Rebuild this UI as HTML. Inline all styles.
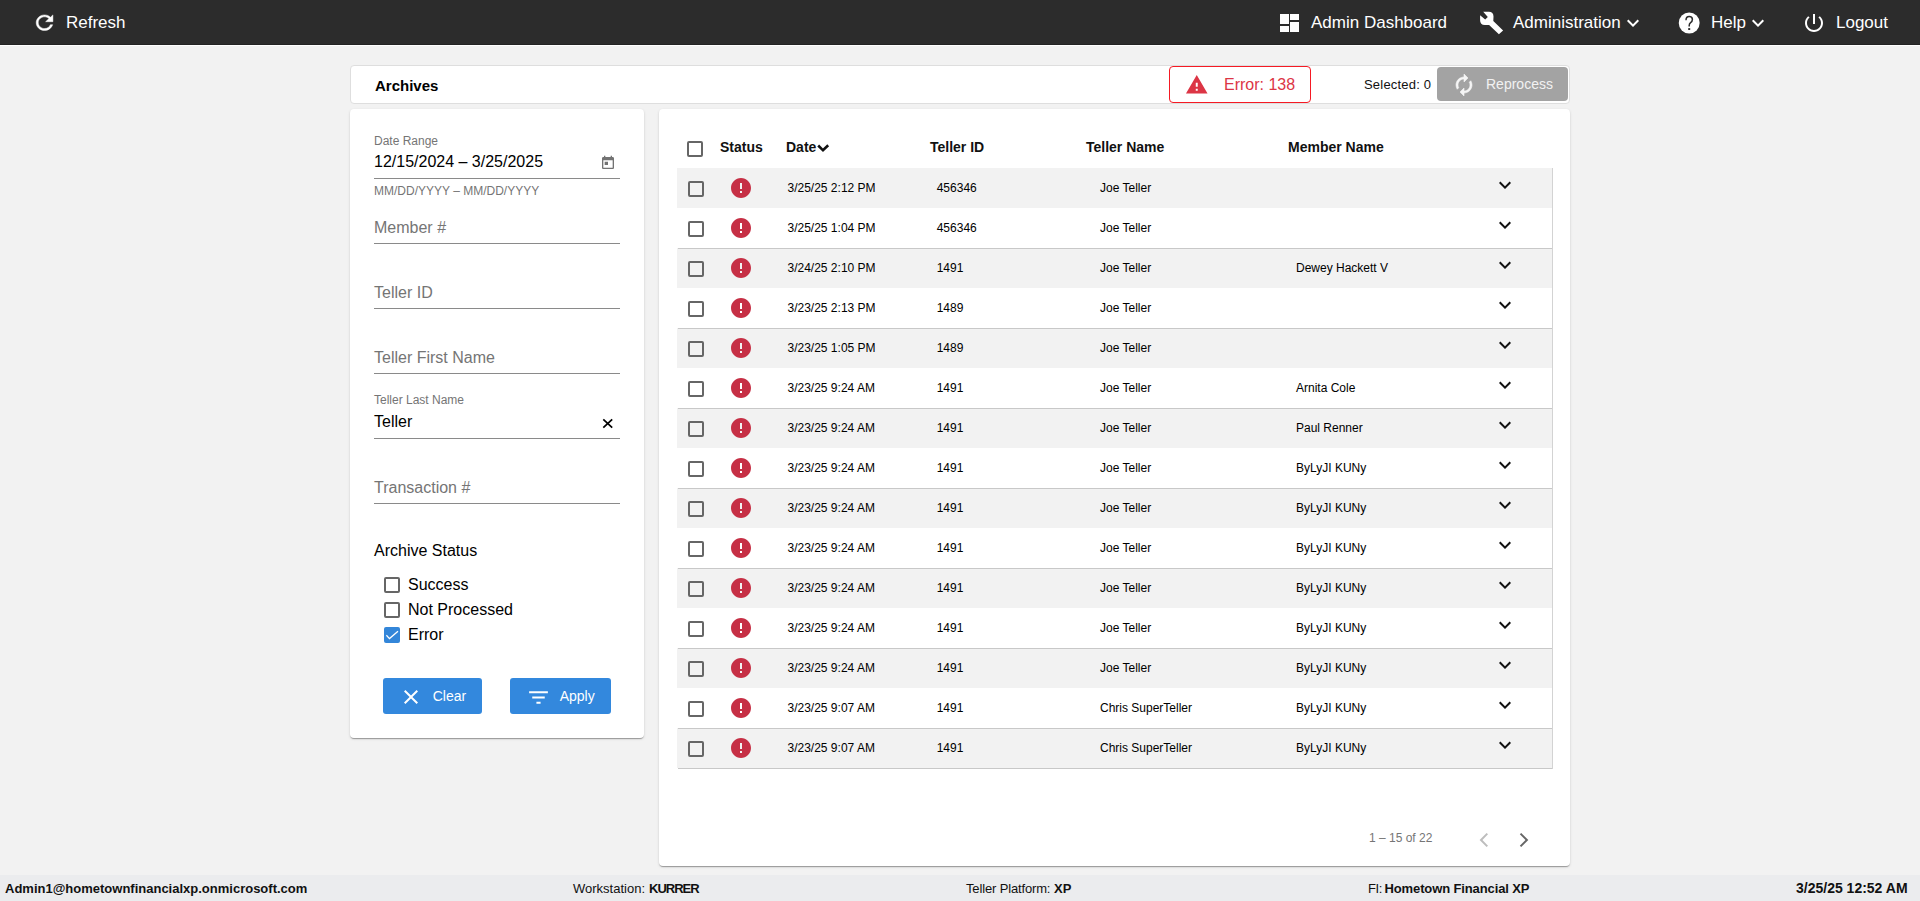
<!DOCTYPE html>
<html><head><meta charset="utf-8">
<style>
html,body{margin:0;padding:0;}
body{width:1920px;height:901px;overflow:hidden;position:relative;background:#f2f2f2;font-family:"Liberation Sans",sans-serif;color:#000;}
.t{position:absolute;white-space:nowrap;line-height:1;}
.ic{position:absolute;display:block;}
.abs{position:absolute;}
.hdr{left:0;top:0;width:1920px;height:44px;background:#2c2c2c;border-bottom:1px solid #232323;}
.hline{left:0;top:45px;width:1920px;height:1px;background:#fff;}
.w{color:#fff;}
.card{background:#fff;border-radius:4px;box-shadow:0 2px 1px -1px rgba(0,0,0,.2),0 1px 1px 0 rgba(0,0,0,.14),0 1px 3px 0 rgba(0,0,0,.12);}
.cb{position:absolute;width:12px;height:12px;border:2px solid #666;border-radius:2px;background:transparent;}
.uline{position:absolute;left:374px;width:246px;height:1px;background:#8a8a8a;}
.ph{color:#757575;}
.lbl{color:#757575;}
.btn{position:absolute;background:#3388dd;border-radius:3px;}
.row{position:absolute;left:677px;width:875px;height:40px;}
.g{background:#f2f2f2;}
.bb{border-bottom:1px solid #c8c8c8;}
.rt{color:#000;}
.hd{font-weight:bold;color:#111;}
.ft{color:#111;}
</style></head><body>
<div class="abs hdr"></div><div class="abs hline"></div>
<svg class="ic" style="left:31.8px;top:11.2px;width:25.1px;height:23.4px" viewBox="0 0 24 24" preserveAspectRatio="none"><path fill="#fff" stroke="#fff" stroke-width="0.45" d="M17.65 6.35C16.2 4.9 14.21 4 12 4c-4.42 0-7.99 3.58-7.99 8s3.57 8 7.99 8c3.73 0 6.84-2.55 7.73-6h-2.08c-.82 2.33-3.04 4-5.65 4-3.31 0-6-2.69-6-6s2.69-6 6-6c1.66 0 3.14.69 4.22 1.78L13 11h7V4l-2.35 2.35z"/></svg>
<div class="t w" style="left:66px;top:13.61px;font-size:17px;">Refresh</div>
<svg class="ic" style="left:1270px;top:8px;width:40px;height:30px" viewBox="0 0 40 30"><g fill="#fff"><rect x="10" y="6" width="9" height="10"/><rect x="10" y="18" width="9" height="6"/><rect x="20" y="6" width="9" height="6"/><rect x="20" y="14" width="9" height="10"/></g></svg>
<div class="t w" style="left:1311px;top:13.61px;font-size:17px;">Admin Dashboard</div>
<svg class="ic" style="left:1474px;top:6px;width:36px;height:34px" viewBox="0 0 36 34"><path fill="#fff" d="M19.3 15 L29.1 24.6 L24.9 28.3 L15.1 18.9 L10.8 18.9 Q6.1 18.9 6.1 14.2 L6.1 9.2 L11.2 13.6 L13.8 10.9 L9.2 5.8 L14.8 5.7 Q19.5 5.7 19.5 10.6 Z"/></svg>
<div class="t w" style="left:1513px;top:13.61px;font-size:17px;">Administration</div>
<svg class="ic" style="left:1621px;top:11px;width:24px;height:24px;" viewBox="0 0 24 24"><path fill="#fff" d="M16.59 8.59L12 13.17 7.41 8.59 6 10l6 6 6-6z"/></svg>
<svg class="ic" style="left:1672px;top:6px;width:36px;height:34px" viewBox="0 0 36 34"><circle cx="17.2" cy="17" r="10.45" fill="#fff"/><path d="M14 14.3 Q14 10.6 17.2 10.6 Q20.4 10.6 20.4 13.6 Q20.4 15.5 18.6 16.6 Q17.2 17.6 17.2 19.4 L17.2 20.6" stroke="#2c2c2c" stroke-width="1.5" fill="none"/><rect x="16.2" y="22.1" width="2" height="1.9" fill="#2c2c2c"/></svg>
<div class="t w" style="left:1711px;top:13.61px;font-size:17px;">Help</div>
<svg class="ic" style="left:1746px;top:11px;width:24px;height:24px;" viewBox="0 0 24 24"><path fill="#fff" d="M16.59 8.59L12 13.17 7.41 8.59 6 10l6 6 6-6z"/></svg>
<svg class="ic" style="left:1802px;top:11px;width:24px;height:24px;" viewBox="0 0 24 24"><path fill="#fff" d="M13 3h-2v10h2V3zm4.83 2.17l-1.42 1.42C17.99 7.86 19 9.81 19 12c0 3.87-3.13 7-7 7s-7-3.13-7-7c0-2.19 1.01-4.14 2.58-5.42L6.17 5.17C4.23 6.82 3 9.26 3 12c0 4.97 4.03 9 9 9s9-4.03 9-9c0-2.74-1.23-5.18-3.17-6.83z"/></svg>
<div class="t w" style="left:1836px;top:13.61px;font-size:17px;">Logout</div>
<div class="abs" style="left:350px;top:65px;width:1218px;height:37px;background:#fff;border:1px solid #dedede;border-radius:4px;"></div>
<div class="t " style="left:375px;top:78.30px;font-size:15px;font-weight:bold;">Archives</div>
<div class="abs" style="left:1169px;top:66px;width:140px;height:35px;border:1px solid #f51a24;border-radius:4px;"></div>
<svg class="ic" style="left:1185.2px;top:73.3px;width:23.5px;height:23.5px;" viewBox="0 0 24 24"><path fill="#dc3545" d="M1 21h22L12 2 1 21zm12-3h-2v-2h2v2zm0-4h-2v-4h2v4z"/></svg>
<div class="t " style="left:1224px;top:76.96px;font-size:16px;color:#dc3545;">Error: 138</div>
<div class="t " style="left:1364px;top:78.00px;font-size:13px;color:#111;letter-spacing:0.2px;">Selected: 0</div>
<div class="abs" style="left:1437px;top:67px;width:131px;height:34px;background:#a3a3a3;border-radius:4px;"></div>
<svg class="ic" style="left:1451.5px;top:73px;width:24px;height:24px;transform:scaleX(-1);" viewBox="0 0 24 24"><path stroke="#f5f5f5" stroke-width="0.6" fill="#f5f5f5" d="M12 4V1L8 5l4 4V6c3.31 0 6 2.69 6 6 0 1.01-.25 1.97-.7 2.8l1.46 1.46C19.54 15.03 20 13.57 20 12c0-4.42-3.58-8-8-8zm0 14c-3.31 0-6-2.69-6-6 0-1.01.25-1.97.7-2.8L5.24 7.74C4.46 8.97 4 10.43 4 12c0 4.42 3.58 8 8 8v3l4-4-4-4v3z"/></svg>
<div class="t " style="left:1486px;top:77.15px;font-size:14px;color:#f2f2f2;">Reprocess</div>
<div class="abs card" style="left:350px;top:109px;width:294px;height:629px;"></div>
<div class="t lbl" style="left:374px;top:134.84px;font-size:12px;">Date Range</div>
<div class="t " style="left:374px;top:154.46px;font-size:16px;color:#000;">12/15/2024 – 3/25/2025</div>
<svg class="ic" style="left:600px;top:155px;width:16px;height:16px;" viewBox="0 0 24 24"><path fill="#737373" d="M19 3h-1V1h-2v2H8V1H6v2H5c-1.11 0-1.99.9-1.99 2L3 19c0 1.1.89 2 2 2h14c1.1 0 2-.9 2-2V5c0-1.1-.9-2-2-2zm0 16H5V8h14v11zM7 10h5v5H7z"/></svg>
<div class="uline" style="top:178px;"></div>
<div class="t lbl" style="left:374px;top:184.84px;font-size:12px;">MM/DD/YYYY – MM/DD/YYYY</div>
<div class="t ph" style="left:374px;top:220.46px;font-size:16px;">Member #</div>
<div class="uline" style="top:243px;"></div>
<div class="t ph" style="left:374px;top:285.46px;font-size:16px;">Teller ID</div>
<div class="uline" style="top:308px;"></div>
<div class="t ph" style="left:374px;top:350.46px;font-size:16px;">Teller First Name</div>
<div class="uline" style="top:373px;"></div>
<div class="t lbl" style="left:374px;top:393.84px;font-size:12px;">Teller Last Name</div>
<div class="t " style="left:374px;top:414.46px;font-size:16px;color:#000;">Teller</div>
<svg class="ic" style="left:598px;top:413px;width:20px;height:20px" viewBox="0 0 20 20"><path d="M5.3 6.3 L14.2 14.7 M14.2 6.3 L5.3 14.7" stroke="#000" stroke-width="1.7" fill="none"/></svg>
<div class="uline" style="top:438px;"></div>
<div class="t ph" style="left:374px;top:480.46px;font-size:16px;">Transaction #</div>
<div class="uline" style="top:503px;"></div>
<div class="t " style="left:374px;top:543.46px;font-size:16px;color:#000;">Archive Status</div>
<div class="cb" style="left:384px;top:577px;"></div>
<div class="t " style="left:408px;top:577.16px;font-size:16px;color:#000;">Success</div>
<div class="cb" style="left:384px;top:602px;"></div>
<div class="t " style="left:408px;top:602.16px;font-size:16px;color:#000;">Not Processed</div>
<div class="abs" style="left:384px;top:627px;width:16px;height:16px;background:#3386d9;border-radius:2px;"></div>
<svg class="ic" style="left:384px;top:627px;width:16px;height:16px" viewBox="0 0 16 16"><path d="M2.4 8.3 L5.5 11.6 L14 4.3" fill="none" stroke="#fff" stroke-width="1.3"/></svg>
<div class="t " style="left:408px;top:627.16px;font-size:16px;color:#000;">Error</div>
<div class="btn" style="left:383px;top:678px;width:99px;height:36px;"></div>
<svg class="ic" style="left:399px;top:685px;width:24px;height:24px;" viewBox="0 0 24 24"><path fill="#fff" d="M19 6.41L17.59 5 12 10.59 6.41 5 5 6.41 10.59 12 5 17.59 6.41 19 12 13.41 17.59 19 19 17.59 13.41 12z"/></svg>
<div class="t w" style="left:432.7px;top:689.15px;font-size:14px;">Clear</div>
<div class="btn" style="left:510px;top:678px;width:101px;height:36px;"></div>
<svg class="ic" style="left:525.5px;top:684.5px;width:25px;height:25px;" viewBox="0 0 24 24"><path fill="#fff" d="M10 18h4v-2h-4v2zM3 6v2h18V6H3zm3 7h12v-2H6v2z"/></svg>
<div class="t w" style="left:559.7px;top:689.15px;font-size:14px;">Apply</div>
<div class="abs card" style="left:659px;top:109px;width:911px;height:757px;"></div>
<div class="cb" style="left:687px;top:141px;"></div>
<div class="t hd" style="left:720px;top:140.15px;font-size:14px;">Status</div>
<div class="t hd" style="left:786px;top:140.15px;font-size:14px;">Date</div>
<svg class="ic" style="left:810px;top:136px;width:24px;height:24px" viewBox="0 0 24 24"><path d="M8.2 9.5 L13 14.3 L18.2 9.3" stroke="#111" stroke-width="2.6" fill="none"/></svg>
<div class="t hd" style="left:930px;top:140.15px;font-size:14px;">Teller ID</div>
<div class="t hd" style="left:1086px;top:140.15px;font-size:14px;">Teller Name</div>
<div class="t hd" style="left:1288px;top:140.15px;font-size:14px;">Member Name</div>
<div class="row g" style="top:168px;height:40px;"></div>
<div class="cb" style="left:688px;top:181px;"></div>
<svg class="ic" style="left:729px;top:176px;width:24px;height:24px;" viewBox="0 0 24 24"><path fill="#c62f45" d="M12 2C6.48 2 2 6.48 2 12s4.48 10 10 10 10-4.48 10-10S17.52 2 12 2zm1 15h-2v-2h2v2zm0-4h-2V7h2v6z"/></svg>
<div class="t rt" style="left:787.5px;top:181.84px;font-size:12px;">3/25/25 2:12 PM</div>
<div class="t rt" style="left:936.7px;top:181.84px;font-size:12px;">456346</div>
<div class="t rt" style="left:1100px;top:181.84px;font-size:12px;">Joe Teller</div>
<svg class="ic" style="left:1492.5px;top:172.8px;width:24px;height:24px;" viewBox="0 0 24 24"><path fill="#111" d="M16.59 8.59L12 13.17 7.41 8.59 6 10l6 6 6-6z"/></svg>
<div class="abs" style="left:678px;top:248px;width:874px;height:1px;background:#c8c8c8;z-index:2;"></div>
<div class="cb" style="left:688px;top:221px;"></div>
<svg class="ic" style="left:729px;top:216px;width:24px;height:24px;" viewBox="0 0 24 24"><path fill="#c62f45" d="M12 2C6.48 2 2 6.48 2 12s4.48 10 10 10 10-4.48 10-10S17.52 2 12 2zm1 15h-2v-2h2v2zm0-4h-2V7h2v6z"/></svg>
<div class="t rt" style="left:787.5px;top:221.84px;font-size:12px;">3/25/25 1:04 PM</div>
<div class="t rt" style="left:936.7px;top:221.84px;font-size:12px;">456346</div>
<div class="t rt" style="left:1100px;top:221.84px;font-size:12px;">Joe Teller</div>
<svg class="ic" style="left:1492.5px;top:212.8px;width:24px;height:24px;" viewBox="0 0 24 24"><path fill="#111" d="M16.59 8.59L12 13.17 7.41 8.59 6 10l6 6 6-6z"/></svg>
<div class="row g" style="top:248px;height:40px;"></div>
<div class="cb" style="left:688px;top:261px;"></div>
<svg class="ic" style="left:729px;top:256px;width:24px;height:24px;" viewBox="0 0 24 24"><path fill="#c62f45" d="M12 2C6.48 2 2 6.48 2 12s4.48 10 10 10 10-4.48 10-10S17.52 2 12 2zm1 15h-2v-2h2v2zm0-4h-2V7h2v6z"/></svg>
<div class="t rt" style="left:787.5px;top:261.84px;font-size:12px;">3/24/25 2:10 PM</div>
<div class="t rt" style="left:936.7px;top:261.84px;font-size:12px;">1491</div>
<div class="t rt" style="left:1100px;top:261.84px;font-size:12px;">Joe Teller</div>
<div class="t rt" style="left:1296px;top:261.84px;font-size:12px;">Dewey Hackett V</div>
<svg class="ic" style="left:1492.5px;top:252.8px;width:24px;height:24px;" viewBox="0 0 24 24"><path fill="#111" d="M16.59 8.59L12 13.17 7.41 8.59 6 10l6 6 6-6z"/></svg>
<div class="abs" style="left:678px;top:328px;width:874px;height:1px;background:#c8c8c8;z-index:2;"></div>
<div class="cb" style="left:688px;top:301px;"></div>
<svg class="ic" style="left:729px;top:296px;width:24px;height:24px;" viewBox="0 0 24 24"><path fill="#c62f45" d="M12 2C6.48 2 2 6.48 2 12s4.48 10 10 10 10-4.48 10-10S17.52 2 12 2zm1 15h-2v-2h2v2zm0-4h-2V7h2v6z"/></svg>
<div class="t rt" style="left:787.5px;top:301.84px;font-size:12px;">3/23/25 2:13 PM</div>
<div class="t rt" style="left:936.7px;top:301.84px;font-size:12px;">1489</div>
<div class="t rt" style="left:1100px;top:301.84px;font-size:12px;">Joe Teller</div>
<svg class="ic" style="left:1492.5px;top:292.8px;width:24px;height:24px;" viewBox="0 0 24 24"><path fill="#111" d="M16.59 8.59L12 13.17 7.41 8.59 6 10l6 6 6-6z"/></svg>
<div class="row g" style="top:328px;height:40px;"></div>
<div class="cb" style="left:688px;top:341px;"></div>
<svg class="ic" style="left:729px;top:336px;width:24px;height:24px;" viewBox="0 0 24 24"><path fill="#c62f45" d="M12 2C6.48 2 2 6.48 2 12s4.48 10 10 10 10-4.48 10-10S17.52 2 12 2zm1 15h-2v-2h2v2zm0-4h-2V7h2v6z"/></svg>
<div class="t rt" style="left:787.5px;top:341.84px;font-size:12px;">3/23/25 1:05 PM</div>
<div class="t rt" style="left:936.7px;top:341.84px;font-size:12px;">1489</div>
<div class="t rt" style="left:1100px;top:341.84px;font-size:12px;">Joe Teller</div>
<svg class="ic" style="left:1492.5px;top:332.8px;width:24px;height:24px;" viewBox="0 0 24 24"><path fill="#111" d="M16.59 8.59L12 13.17 7.41 8.59 6 10l6 6 6-6z"/></svg>
<div class="abs" style="left:678px;top:408px;width:874px;height:1px;background:#c8c8c8;z-index:2;"></div>
<div class="cb" style="left:688px;top:381px;"></div>
<svg class="ic" style="left:729px;top:376px;width:24px;height:24px;" viewBox="0 0 24 24"><path fill="#c62f45" d="M12 2C6.48 2 2 6.48 2 12s4.48 10 10 10 10-4.48 10-10S17.52 2 12 2zm1 15h-2v-2h2v2zm0-4h-2V7h2v6z"/></svg>
<div class="t rt" style="left:787.5px;top:381.84px;font-size:12px;">3/23/25 9:24 AM</div>
<div class="t rt" style="left:936.7px;top:381.84px;font-size:12px;">1491</div>
<div class="t rt" style="left:1100px;top:381.84px;font-size:12px;">Joe Teller</div>
<div class="t rt" style="left:1296px;top:381.84px;font-size:12px;">Arnita Cole</div>
<svg class="ic" style="left:1492.5px;top:372.8px;width:24px;height:24px;" viewBox="0 0 24 24"><path fill="#111" d="M16.59 8.59L12 13.17 7.41 8.59 6 10l6 6 6-6z"/></svg>
<div class="row g" style="top:408px;height:40px;"></div>
<div class="cb" style="left:688px;top:421px;"></div>
<svg class="ic" style="left:729px;top:416px;width:24px;height:24px;" viewBox="0 0 24 24"><path fill="#c62f45" d="M12 2C6.48 2 2 6.48 2 12s4.48 10 10 10 10-4.48 10-10S17.52 2 12 2zm1 15h-2v-2h2v2zm0-4h-2V7h2v6z"/></svg>
<div class="t rt" style="left:787.5px;top:421.84px;font-size:12px;">3/23/25 9:24 AM</div>
<div class="t rt" style="left:936.7px;top:421.84px;font-size:12px;">1491</div>
<div class="t rt" style="left:1100px;top:421.84px;font-size:12px;">Joe Teller</div>
<div class="t rt" style="left:1296px;top:421.84px;font-size:12px;">Paul Renner</div>
<svg class="ic" style="left:1492.5px;top:412.8px;width:24px;height:24px;" viewBox="0 0 24 24"><path fill="#111" d="M16.59 8.59L12 13.17 7.41 8.59 6 10l6 6 6-6z"/></svg>
<div class="abs" style="left:678px;top:488px;width:874px;height:1px;background:#c8c8c8;z-index:2;"></div>
<div class="cb" style="left:688px;top:461px;"></div>
<svg class="ic" style="left:729px;top:456px;width:24px;height:24px;" viewBox="0 0 24 24"><path fill="#c62f45" d="M12 2C6.48 2 2 6.48 2 12s4.48 10 10 10 10-4.48 10-10S17.52 2 12 2zm1 15h-2v-2h2v2zm0-4h-2V7h2v6z"/></svg>
<div class="t rt" style="left:787.5px;top:461.84px;font-size:12px;">3/23/25 9:24 AM</div>
<div class="t rt" style="left:936.7px;top:461.84px;font-size:12px;">1491</div>
<div class="t rt" style="left:1100px;top:461.84px;font-size:12px;">Joe Teller</div>
<div class="t rt" style="left:1296px;top:461.84px;font-size:12px;">ByLyJI KUNy</div>
<svg class="ic" style="left:1492.5px;top:452.8px;width:24px;height:24px;" viewBox="0 0 24 24"><path fill="#111" d="M16.59 8.59L12 13.17 7.41 8.59 6 10l6 6 6-6z"/></svg>
<div class="row g" style="top:488px;height:40px;"></div>
<div class="cb" style="left:688px;top:501px;"></div>
<svg class="ic" style="left:729px;top:496px;width:24px;height:24px;" viewBox="0 0 24 24"><path fill="#c62f45" d="M12 2C6.48 2 2 6.48 2 12s4.48 10 10 10 10-4.48 10-10S17.52 2 12 2zm1 15h-2v-2h2v2zm0-4h-2V7h2v6z"/></svg>
<div class="t rt" style="left:787.5px;top:501.84px;font-size:12px;">3/23/25 9:24 AM</div>
<div class="t rt" style="left:936.7px;top:501.84px;font-size:12px;">1491</div>
<div class="t rt" style="left:1100px;top:501.84px;font-size:12px;">Joe Teller</div>
<div class="t rt" style="left:1296px;top:501.84px;font-size:12px;">ByLyJI KUNy</div>
<svg class="ic" style="left:1492.5px;top:492.8px;width:24px;height:24px;" viewBox="0 0 24 24"><path fill="#111" d="M16.59 8.59L12 13.17 7.41 8.59 6 10l6 6 6-6z"/></svg>
<div class="abs" style="left:678px;top:568px;width:874px;height:1px;background:#c8c8c8;z-index:2;"></div>
<div class="cb" style="left:688px;top:541px;"></div>
<svg class="ic" style="left:729px;top:536px;width:24px;height:24px;" viewBox="0 0 24 24"><path fill="#c62f45" d="M12 2C6.48 2 2 6.48 2 12s4.48 10 10 10 10-4.48 10-10S17.52 2 12 2zm1 15h-2v-2h2v2zm0-4h-2V7h2v6z"/></svg>
<div class="t rt" style="left:787.5px;top:541.84px;font-size:12px;">3/23/25 9:24 AM</div>
<div class="t rt" style="left:936.7px;top:541.84px;font-size:12px;">1491</div>
<div class="t rt" style="left:1100px;top:541.84px;font-size:12px;">Joe Teller</div>
<div class="t rt" style="left:1296px;top:541.84px;font-size:12px;">ByLyJI KUNy</div>
<svg class="ic" style="left:1492.5px;top:532.8px;width:24px;height:24px;" viewBox="0 0 24 24"><path fill="#111" d="M16.59 8.59L12 13.17 7.41 8.59 6 10l6 6 6-6z"/></svg>
<div class="row g" style="top:568px;height:40px;"></div>
<div class="cb" style="left:688px;top:581px;"></div>
<svg class="ic" style="left:729px;top:576px;width:24px;height:24px;" viewBox="0 0 24 24"><path fill="#c62f45" d="M12 2C6.48 2 2 6.48 2 12s4.48 10 10 10 10-4.48 10-10S17.52 2 12 2zm1 15h-2v-2h2v2zm0-4h-2V7h2v6z"/></svg>
<div class="t rt" style="left:787.5px;top:581.84px;font-size:12px;">3/23/25 9:24 AM</div>
<div class="t rt" style="left:936.7px;top:581.84px;font-size:12px;">1491</div>
<div class="t rt" style="left:1100px;top:581.84px;font-size:12px;">Joe Teller</div>
<div class="t rt" style="left:1296px;top:581.84px;font-size:12px;">ByLyJI KUNy</div>
<svg class="ic" style="left:1492.5px;top:572.8px;width:24px;height:24px;" viewBox="0 0 24 24"><path fill="#111" d="M16.59 8.59L12 13.17 7.41 8.59 6 10l6 6 6-6z"/></svg>
<div class="abs" style="left:678px;top:648px;width:874px;height:1px;background:#c8c8c8;z-index:2;"></div>
<div class="cb" style="left:688px;top:621px;"></div>
<svg class="ic" style="left:729px;top:616px;width:24px;height:24px;" viewBox="0 0 24 24"><path fill="#c62f45" d="M12 2C6.48 2 2 6.48 2 12s4.48 10 10 10 10-4.48 10-10S17.52 2 12 2zm1 15h-2v-2h2v2zm0-4h-2V7h2v6z"/></svg>
<div class="t rt" style="left:787.5px;top:621.84px;font-size:12px;">3/23/25 9:24 AM</div>
<div class="t rt" style="left:936.7px;top:621.84px;font-size:12px;">1491</div>
<div class="t rt" style="left:1100px;top:621.84px;font-size:12px;">Joe Teller</div>
<div class="t rt" style="left:1296px;top:621.84px;font-size:12px;">ByLyJI KUNy</div>
<svg class="ic" style="left:1492.5px;top:612.8px;width:24px;height:24px;" viewBox="0 0 24 24"><path fill="#111" d="M16.59 8.59L12 13.17 7.41 8.59 6 10l6 6 6-6z"/></svg>
<div class="row g" style="top:648px;height:40px;"></div>
<div class="cb" style="left:688px;top:661px;"></div>
<svg class="ic" style="left:729px;top:656px;width:24px;height:24px;" viewBox="0 0 24 24"><path fill="#c62f45" d="M12 2C6.48 2 2 6.48 2 12s4.48 10 10 10 10-4.48 10-10S17.52 2 12 2zm1 15h-2v-2h2v2zm0-4h-2V7h2v6z"/></svg>
<div class="t rt" style="left:787.5px;top:661.84px;font-size:12px;">3/23/25 9:24 AM</div>
<div class="t rt" style="left:936.7px;top:661.84px;font-size:12px;">1491</div>
<div class="t rt" style="left:1100px;top:661.84px;font-size:12px;">Joe Teller</div>
<div class="t rt" style="left:1296px;top:661.84px;font-size:12px;">ByLyJI KUNy</div>
<svg class="ic" style="left:1492.5px;top:652.8px;width:24px;height:24px;" viewBox="0 0 24 24"><path fill="#111" d="M16.59 8.59L12 13.17 7.41 8.59 6 10l6 6 6-6z"/></svg>
<div class="abs" style="left:678px;top:728px;width:874px;height:1px;background:#c8c8c8;z-index:2;"></div>
<div class="cb" style="left:688px;top:701px;"></div>
<svg class="ic" style="left:729px;top:696px;width:24px;height:24px;" viewBox="0 0 24 24"><path fill="#c62f45" d="M12 2C6.48 2 2 6.48 2 12s4.48 10 10 10 10-4.48 10-10S17.52 2 12 2zm1 15h-2v-2h2v2zm0-4h-2V7h2v6z"/></svg>
<div class="t rt" style="left:787.5px;top:701.84px;font-size:12px;">3/23/25 9:07 AM</div>
<div class="t rt" style="left:936.7px;top:701.84px;font-size:12px;">1491</div>
<div class="t rt" style="left:1100px;top:701.84px;font-size:12px;">Chris SuperTeller</div>
<div class="t rt" style="left:1296px;top:701.84px;font-size:12px;">ByLyJI KUNy</div>
<svg class="ic" style="left:1492.5px;top:692.8px;width:24px;height:24px;" viewBox="0 0 24 24"><path fill="#111" d="M16.59 8.59L12 13.17 7.41 8.59 6 10l6 6 6-6z"/></svg>
<div class="row g" style="top:728px;height:40px;"></div>
<div class="abs" style="left:678px;top:768px;width:874px;height:1px;background:#c8c8c8;z-index:2;"></div>
<div class="cb" style="left:688px;top:741px;"></div>
<svg class="ic" style="left:729px;top:736px;width:24px;height:24px;" viewBox="0 0 24 24"><path fill="#c62f45" d="M12 2C6.48 2 2 6.48 2 12s4.48 10 10 10 10-4.48 10-10S17.52 2 12 2zm1 15h-2v-2h2v2zm0-4h-2V7h2v6z"/></svg>
<div class="t rt" style="left:787.5px;top:741.84px;font-size:12px;">3/23/25 9:07 AM</div>
<div class="t rt" style="left:936.7px;top:741.84px;font-size:12px;">1491</div>
<div class="t rt" style="left:1100px;top:741.84px;font-size:12px;">Chris SuperTeller</div>
<div class="t rt" style="left:1296px;top:741.84px;font-size:12px;">ByLyJI KUNy</div>
<svg class="ic" style="left:1492.5px;top:732.8px;width:24px;height:24px;" viewBox="0 0 24 24"><path fill="#111" d="M16.59 8.59L12 13.17 7.41 8.59 6 10l6 6 6-6z"/></svg>
<div class="abs" style="left:1552px;top:168px;width:1px;height:601px;background:#d3d3d3;"></div>
<div class="t " style="left:1369px;top:831.84px;font-size:12px;color:#757575;">1 – 15 of 22</div>
<svg class="ic" style="left:1470px;top:824px;width:70px;height:32px" viewBox="0 0 70 32"><path d="M17.3 9.6 L11 16 L17.3 22.4" stroke="#bdbdbd" stroke-width="2" fill="none"/><path d="M50.5 9.6 L56.9 16 L50.5 22.4" stroke="#666" stroke-width="2" fill="none"/></svg>
<div class="abs" style="left:0;top:875px;width:1920px;height:26px;background:#ebecee;"></div>
<div class="t ft" style="left:5px;top:882.00px;font-size:13px;font-weight:bold;">Admin1@hometownfinancialxp.onmicrosoft.com</div>
<div class="t ft" style="left:573px;top:882.00px;font-size:13px;">Workstation:</div>
<div class="t ft" style="left:649px;top:882.00px;font-size:13px;font-weight:bold;letter-spacing:-1px;">KURRER</div>
<div class="t ft" style="left:966px;top:882.00px;font-size:13px;letter-spacing:-0.15px;">Teller Platform:</div>
<div class="t ft" style="left:1054px;top:882.00px;font-size:13px;font-weight:bold;">XP</div>
<div class="t ft" style="left:1368px;top:882.00px;font-size:13px;letter-spacing:-0.4px;">FI:</div>
<div class="t ft" style="left:1384.5px;top:882.00px;font-size:13px;font-weight:bold;letter-spacing:-0.12px;">Hometown Financial XP</div>
<div class="t ft" style="left:1796px;top:881.15px;font-size:14px;font-weight:bold;">3/25/25 12:52 AM</div>
</body></html>
